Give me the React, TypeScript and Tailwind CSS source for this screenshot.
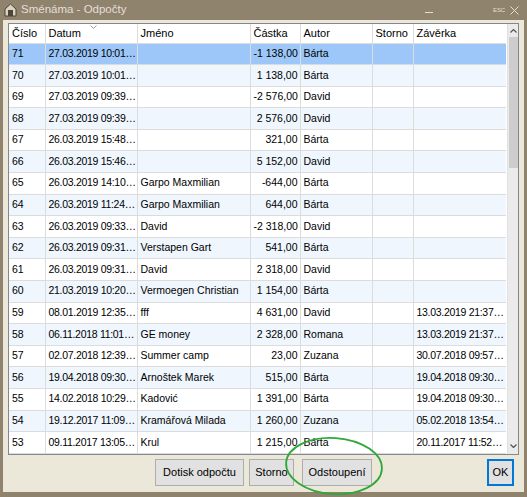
import React from "react";

type Row = {
  id: number;
  date: string;
  name: string;
  amount: string;
  author: string;
  closed: string;
};

const rows: Row[] = [
  { id: 71, date: "27.03.2019 10:01…", name: "", amount: "-1 138,00", author: "Bárta", closed: "" },
  { id: 70, date: "27.03.2019 10:01…", name: "", amount: "1 138,00", author: "Bárta", closed: "" },
  { id: 69, date: "27.03.2019 09:39…", name: "", amount: "-2 576,00", author: "David", closed: "" },
  { id: 68, date: "27.03.2019 09:39…", name: "", amount: "2 576,00", author: "David", closed: "" },
  { id: 67, date: "26.03.2019 15:48…", name: "", amount: "321,00", author: "Bárta", closed: "" },
  { id: 66, date: "26.03.2019 15:46…", name: "", amount: "5 152,00", author: "David", closed: "" },
  { id: 65, date: "26.03.2019 14:10…", name: "Garpo Maxmilian", amount: "-644,00", author: "Bárta", closed: "" },
  { id: 64, date: "26.03.2019 11:24…", name: "Garpo Maxmilian", amount: "644,00", author: "Bárta", closed: "" },
  { id: 63, date: "26.03.2019 09:33…", name: "David", amount: "-2 318,00", author: "David", closed: "" },
  { id: 62, date: "26.03.2019 09:31…", name: "Verstapen Gart", amount: "541,00", author: "Bárta", closed: "" },
  { id: 61, date: "26.03.2019 09:31…", name: "David", amount: "2 318,00", author: "David", closed: "" },
  { id: 60, date: "21.03.2019 10:20…", name: "Vermoegen Christian", amount: "1 154,00", author: "Bárta", closed: "" },
  { id: 59, date: "08.01.2019 12:35…", name: "fff", amount: "4 631,00", author: "David", closed: "13.03.2019 21:37…" },
  { id: 58, date: "06.11.2018 11:01…", name: "GE money", amount: "2 328,00", author: "Romana", closed: "13.03.2019 21:37…" },
  { id: 57, date: "02.07.2018 12:39…", name: "Summer camp", amount: "23,00", author: "Zuzana", closed: "30.07.2018 09:57…" },
  { id: 56, date: "19.04.2018 09:30…", name: "Arnoštek Marek", amount: "515,00", author: "Bárta", closed: "19.04.2018 09:30…" },
  { id: 55, date: "14.02.2018 10:29…", name: "Kadović", amount: "1 391,00", author: "Bárta", closed: "19.04.2018 09:30…" },
  { id: 54, date: "19.12.2017 11:09…", name: "Kramářová Milada", amount: "1 260,00", author: "Zuzana", closed: "05.02.2018 13:54…" },
  { id: 53, date: "09.11.2017 13:05…", name: "Krul", amount: "1 215,00", author: "Bárta", closed: "20.11.2017 11:52…" },
];

const cell = "border-r border-b border-[#dcdcdc] px-[3px] whitespace-nowrap overflow-hidden";
const dateCell = "border-r border-b border-[#dcdcdc] pl-[3px] pr-0 whitespace-nowrap overflow-hidden tracking-[-0.3px]";

export default function App() {
  return (
    <div
      className="relative w-[527px] h-[497px] bg-[#8f836e] flex flex-col text-[11px] text-black"
      style={{ fontFamily: '"Liberation Sans", Arial, sans-serif' }}
    >
      {/* Title bar */}
      <div className="h-[20px] flex items-center pl-[4px] pr-[8px] text-[#e4dfd6]">
        <svg width="13" height="14" viewBox="0 0 13 14" className="mr-[4px]">
          <path d="M1 6 L6.5 1 L12 6 L12 13 L1 13 Z" fill="#d9d3c6" stroke="#4e4536" strokeWidth="1" />
          <rect x="4" y="7" width="5" height="6" fill="#4e4536" />
        </svg>
        <span className="text-[11.5px]">Sménáma - Odpočty</span>
        <div className="flex-1" />
        <span className="w-[8px] h-px bg-[#e4dfd6] mr-[60px] mt-[4px]" />
        <span className="text-[6px] tracking-tight mr-[5px] mt-[1px]">ESC</span>
        <svg width="9" height="9" viewBox="0 0 9 9">
          <path d="M0.5 0.5 L8.5 8.5 M8.5 0.5 L0.5 8.5" stroke="#e4dfd6" strokeWidth="1" />
        </svg>
      </div>

      {/* Body */}
      <div className="flex-1 mx-[3px] mb-[5px] bg-[#ece8d9] flex flex-col pt-[3px] pb-[6px]">
        <div className="mx-[5px] h-[432px] border border-[#828790] bg-white flex">
          <div className="flex-1 overflow-hidden">
            <table className="table-fixed border-collapse w-[497px] text-[10.5px]">
              <colgroup>
                <col className="w-[36px]" />
                <col className="w-[92px]" />
                <col className="w-[113px]" />
                <col className="w-[50px]" />
                <col className="w-[72px]" />
                <col className="w-[41px]" />
                <col className="w-[93px]" />
              </colgroup>
              <thead>
                <tr className="h-[19px] text-left text-[11px]">
                  <th className={cell + " font-normal"}>Číslo</th>
                  <th className={cell + " font-normal relative"}>
                    Datum
                    <svg width="7" height="4" viewBox="0 0 7 4" className="absolute left-[44px] top-[1px]">
                      <path d="M0.5 0.5 L3.5 3.5 L6.5 0.5" stroke="#9a9a9a" fill="none" strokeWidth="1" />
                    </svg>
                  </th>
                  <th className={cell + " font-normal"}>Jméno</th>
                  <th className={cell + " font-normal"}>Částka</th>
                  <th className={cell + " font-normal"}>Autor</th>
                  <th className={cell + " font-normal"}>Storno</th>
                  <th className={cell + " font-normal border-r-0"}>Závěrka</th>
                </tr>
              </thead>
              <tbody>
                {rows.map((r, i) => (
                  <tr
                    key={r.id}
                    className={
                      "h-[21.6px] " +
                      (i === 0 ? "bg-[#9cc7f8]" : i % 2 === 1 ? "bg-[#eff6fd]" : "bg-white")
                    }
                  >
                    <td className={cell}>{r.id}</td>
                    <td className={dateCell}>{r.date}</td>
                    <td className={cell}>{r.name}</td>
                    <td className={cell + " text-right pr-[2px]"}>{r.amount}</td>
                    <td className={cell + " px-[2px]"}>{r.author}</td>
                    <td className={cell}></td>
                    <td className={dateCell + " border-r-0"}>{r.closed}</td>
                  </tr>
                ))}
              </tbody>
            </table>
          </div>

          {/* Scrollbar */}
          <div className="w-[11px] bg-[#ebebeb] flex flex-col items-center border-l border-[#e0e0e0]">
            <div className="h-[13px] flex items-center justify-center">
              <svg width="7" height="4" viewBox="0 0 7 4">
                <path d="M0.5 3.5 L3.5 0.5 L6.5 3.5" stroke="#555" fill="none" strokeWidth="1.2" />
              </svg>
            </div>
            <div className="w-[9px] h-[131px] bg-[#cdcdcd]" />
            <div className="flex-1" />
            <div className="h-[16px] flex items-center justify-center">
              <svg width="7" height="4" viewBox="0 0 7 4">
                <path d="M0.5 0.5 L3.5 3.5 L6.5 0.5" stroke="#555" fill="none" strokeWidth="1.2" />
              </svg>
            </div>
          </div>
        </div>

        {/* Buttons */}
        <div className="mt-[4px] h-[27px] grid grid-cols-[1fr_auto_1fr] px-[10px]">
          <div />
          <div className="flex gap-[5px]">
            <button className="h-[27px] w-[89px] bg-[#e1e1e1] border border-[#adadad]">Dotisk odpočtu</button>
            <button className="h-[27px] w-[45px] bg-[#e1e1e1] border border-[#adadad]">Storno</button>
            <button className="h-[27px] w-[70px] ml-[3px] bg-[#e1e1e1] border border-[#adadad]">Odstoupení</button>
          </div>
          <div className="flex justify-end">
            <button className="h-[27px] w-[27px] bg-[#e1e1e1] border-2 border-[#0078d7]">OK</button>
          </div>
        </div>
      </div>

      {/* Hand-drawn highlight */}
      <svg className="absolute left-0 top-0 pointer-events-none" width="527" height="497">
        <ellipse
          cx="334"
          cy="466"
          rx="48"
          ry="28"
          fill="none"
          stroke="#2fa83a"
          strokeWidth="1.8"
          transform="rotate(4 334 466)"
        />
      </svg>
    </div>
  );
}
